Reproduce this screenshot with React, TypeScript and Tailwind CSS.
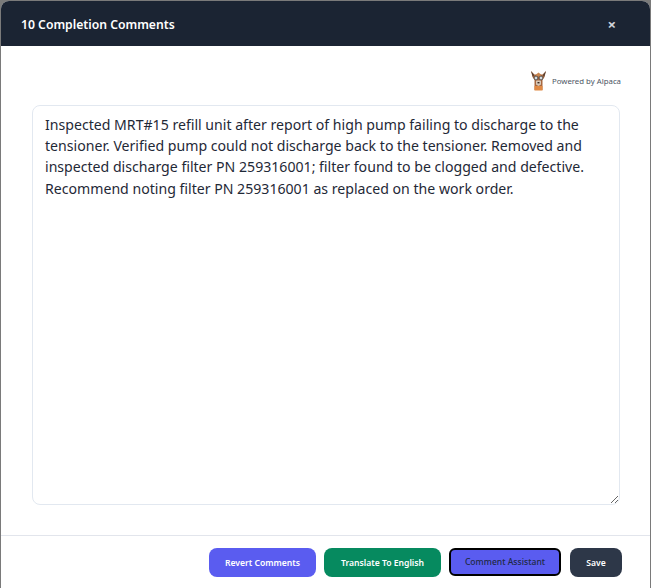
const FONT = "font-['Noto_Sans',sans-serif]"

function AlpacaLogo() {
  return (
    <svg width="17" height="21" viewBox="0 0 17 21" className="shrink-0">
      <path d="M1 1 L4.5 4.5 L12.5 4.5 L16 1 L14.5 7 L12.5 10 L12.5 20 L4.5 20 L4.5 10 L2.5 7 Z" fill="#a9683f" />
      <path d="M1 1 L4 5 L3 7 Z M16 1 L13 5 L14 7 Z" fill="#4a3b32" />
      <path d="M6 4.5 L8.5 2.5 L11 4.5 L11 6.5 L6 6.5 Z" fill="#c98650" />
      <path d="M6 10.5 L11 10.5 L11 14.5 L8.5 16 L6 14.5 Z" fill="#d8c7b6" />
      <path d="M4.5 16 L12.5 16 L12.5 20.5 L4.5 20.5 Z" fill="#e08a45" />
      <circle cx="6" cy="8" r="1.9" fill="#d5dadd" stroke="#333" strokeWidth="0.7" />
      <circle cx="11" cy="8" r="1.9" fill="#d5dadd" stroke="#333" strokeWidth="0.7" />
      <rect x="7.5" y="12" width="2" height="1.4" fill="#3b2a20" />
    </svg>
  )
}

const COMMENT =
  'Inspected MRT#15 refill unit after report of high pump failing to discharge to the tensioner. Verified pump could not discharge back to the tensioner. Removed and inspected discharge filter PN 259316001; filter found to be clogged and defective. Recommend noting filter PN 259316001 as replaced on the work order.'

export default function App() {
  return (
    <div className={`h-[588px] w-[651px] bg-[#7a7a7a] pl-px pr-px pt-px ${FONT}`}>
      <div className="flex h-[587px] flex-col overflow-hidden rounded-t-lg bg-white">
        {/* Header */}
        <div className="flex h-[45px] shrink-0 items-center justify-between bg-[#1b2433] pl-[20px] pr-[34px]">
          <h2 className="pt-[3px] text-[12.2px] font-semibold text-white">10 Completion Comments</h2>
          <button className="pt-px text-[15px] font-bold leading-none text-[#d1d5db]">×</button>
        </div>

        {/* Body */}
        <div className="flex flex-1 flex-col border-b border-[#e2e5ec] pl-[31px] pr-[30px]">
          <div className="flex h-[59px] justify-end pt-[24px]">
            <div className="-mr-px flex h-[21px] items-center gap-[5px]">
              <AlpacaLogo />
              <span className="pt-[2px] text-[7.8px] text-[#4b5563]">Powered by Alpaca</span>
            </div>
          </div>
          <textarea
            readOnly
            defaultValue={COMMENT}
            className="h-[400px] w-full rounded-lg border border-[#e2e8f0] bg-white px-3 py-2 text-[14.12px] leading-[21.2px] text-[#1f2937] outline-none"
          />
        </div>

        {/* Footer */}
        <div className="flex h-[52px] shrink-0 items-start justify-end gap-2 pr-[28px] pt-[12px]">
          <button className="h-[29px] w-[107px] rounded-lg bg-[#5a5cf0] pt-px text-[8.6px] font-semibold text-white">
            Revert Comments
          </button>
          <button className="h-[29px] w-[117px] rounded-lg bg-[#068a5f] pt-px text-[8.6px] font-semibold text-white">
            Translate To English
          </button>
          <button className="h-[28px] w-[112px] rounded-md border-2 border-black bg-[#5a5cf0] pt-px text-[8.6px] font-medium text-[#1f2a44]">
            Comment Assistant
          </button>
          <button className="ml-px h-[29px] w-[52px] rounded-lg bg-[#2d3748] pt-px text-[8.6px] font-semibold text-white">
            Save
          </button>
        </div>
      </div>
    </div>
  )
}
